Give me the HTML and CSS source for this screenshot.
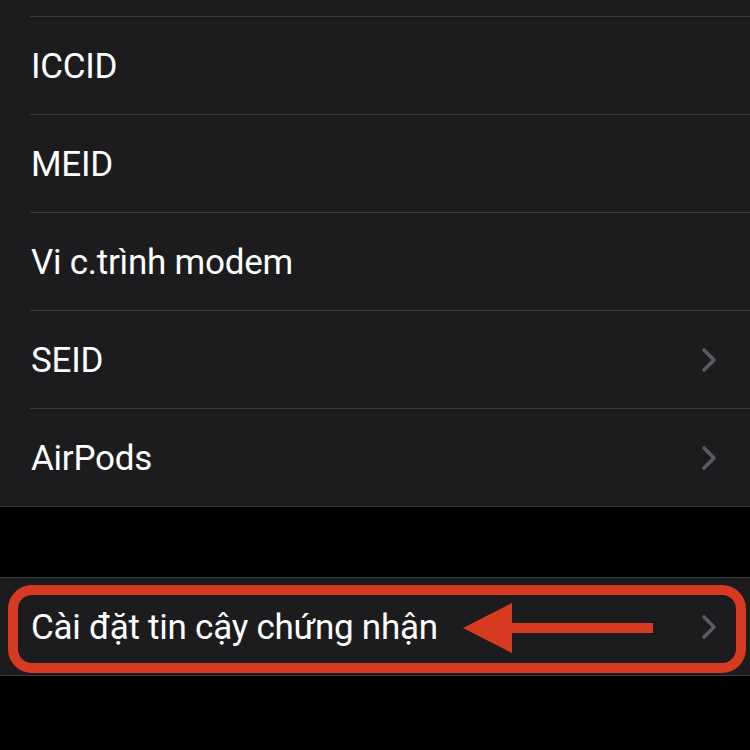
FILE: index.html
```
<!DOCTYPE html>
<html lang="vi">
<head>
<meta charset="utf-8">
<link rel="stylesheet" href="styles.css">
</head>
<body>
<div class="group">
  <div class="spacer"></div>
  <div class="cell"><div class="inner"><span class="label">ICCID</span></div></div>
  <div class="cell"><div class="inner"><span class="label">MEID</span></div></div>
  <div class="cell"><div class="inner"><span class="label">Vi c.trình modem</span></div></div>
  <div class="cell"><div class="inner"><span class="label">SEID</span>
    <svg class="chev" viewBox="0 0 16 26"><polyline points="3,3 13,13 3,23"/></svg></div></div>
  <div class="cell"><div class="inner"><span class="label">AirPods</span>
    <svg class="chev" viewBox="0 0 16 26"><polyline points="3,3 13,13 3,23"/></svg></div></div>
</div>
<div class="gap"></div>
<div class="group group2">
  <div class="cell"><div class="inner noline"><span class="label">Cài đặt tin cậy chứng nhận</span>
    <svg class="chev" viewBox="0 0 16 26"><polyline points="3,3 13,13 3,23"/></svg></div></div>
  <div class="highlight"></div>
  <svg class="arrow" viewBox="0 0 192 52"><polygon points="0,25 49,0 49,20 190,20 190,30 49,30 49,50"/></svg>
</div>
</body>
</html>
```
FILE: styles.css
```
html, body {
  margin: 0;
  padding: 0;
  background: #000;
  width: 750px;
  height: 750px;
  overflow: hidden;
}
body {
  font-family: Roboto, "Noto Sans", sans-serif;
  color: #fff;
}
.group {
  background: #1c1c1e;
  border-bottom: 1px solid #3a3a3d;
}
.spacer {
  height: 16px;
}
.cell {
  padding-left: 30px;
}
.inner {
  height: 97px;
  border-top: 1px solid #3a3a3d;
  display: flex;
  align-items: center;
  justify-content: space-between;
  padding-right: 33px;
}
.inner.noline {
  border-top: none;
}
.label {
  font-size: 35px;
  letter-spacing: -0.25px;
  line-height: 1;
  margin-left: 1px;
  margin-top: 2px;
}
.chev {
  width: 16px;
  height: 26px;
  margin-top: 1px;
}
.chev polyline {
  fill: none;
  stroke: #5b5b60;
  stroke-width: 3.6;
  stroke-linecap: round;
  stroke-linejoin: round;
}
.gap {
  height: 70px;
}
.group2 {
  position: relative;
  border-top: 1px solid #3a3a3d;
}
.highlight {
  position: absolute;
  left: 8px;
  top: 7px;
  width: 718px;
  height: 68px;
  border: 10px solid #d63b22;
  border-radius: 24px;
}
.arrow {
  position: absolute;
  left: 463px;
  top: 25px;
  width: 192px;
  height: 52px;
}
.arrow polygon {
  fill: #d63b22;
}
```
